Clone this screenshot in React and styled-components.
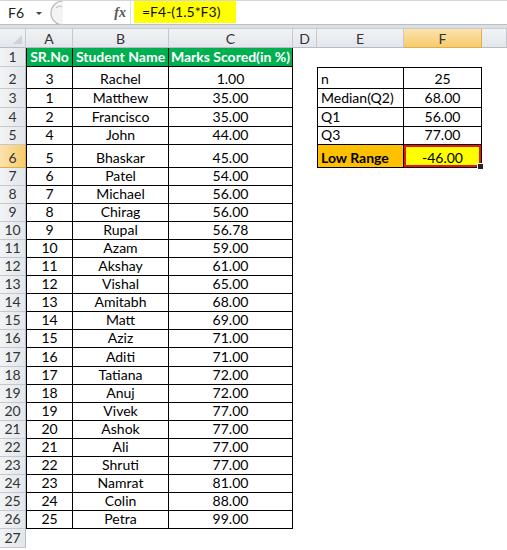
import React from 'react';
import styled, { createGlobalStyle } from 'styled-components';

const GlobalStyle = createGlobalStyle`
  html, body { margin: 0; padding: 0; background: #fff; }
  body { font-family: Lato, "Open Sans", sans-serif; }
`;

const Sheet = styled.div`
  width: 507px;
  height: 550px;
  overflow: hidden;
  background: #fff;
  display: flex;
  flex-direction: column;
`;

const FormulaBar = styled.div`
  display: flex;
  height: 25px;
  box-sizing: border-box;
  border-top: 1px solid #d6d6d6;
  border-bottom: 1px solid #b9bec5;
  background: #fff;
`;

const NameBox = styled.div`
  width: 48px;
  display: flex;
  align-items: center;
  justify-content: space-between;
  padding: 0 6px 0 8px;
  box-sizing: border-box;
  font-size: 14px;
  color: #222;
`;

const Arrow = styled.span`
  width: 0;
  height: 0;
  border-left: 3px solid transparent;
  border-right: 3px solid transparent;
  border-top: 3px solid #444;
  margin-top: 2px;
`;

const Grabber = styled.svg`
  width: 16px;
  height: 24px;
  flex: none;
`;

const FxZone = styled.div`
  width: 66px;
  display: flex;
  align-items: center;
  justify-content: flex-end;
  padding-right: 4px;
  box-sizing: border-box;
`;

const Fx = styled.span`
  font-family: "Liberation Serif", serif;
  font-style: italic;
  font-weight: 700;
  font-size: 14px;
  color: #555;
`;

const FormulaInput = styled.div`
  flex: 1;
  display: flex;
  align-items: stretch;
  padding-left: 3px;
  border-left: 1px solid #e0e0e0;
`;

const Highlight = styled.span`
  background: #ffff00;
  display: flex;
  align-items: center;
  padding: 0 16px 1px 8px;
  font-size: 14px;
  color: #111;
  margin-bottom: 1px;
`;

const Band = styled.div`
  height: 4px;
  background: #dcdfe3;
  border-bottom: 1px solid #c8ccd1;
  box-sizing: border-box;
`;

const Grid = styled.div`
  display: grid;
  grid-template-columns: 26px 47px 96px 124px 24px 87px 78px 1fr;
  grid-template-rows: 19px 19px 22px 19px 19px 18px 23px repeat(20, 18.05px) 1fr;
`;

const Corner = styled.div`
  position: relative;
  background: linear-gradient(#f1f3f5, #e3e6ea);
  border-right: 1px solid #c5c9cf;
  border-bottom: 1px solid #b5bcc5;
  box-sizing: border-box;

  &::after {
    content: '';
    position: absolute;
    right: 3px;
    bottom: 3px;
    border-left: 9px solid transparent;
    border-bottom: 9px solid #cfd3d8;
  }
`;

const ColHead = styled.div`
  box-sizing: border-box;
  display: flex;
  align-items: center;
  justify-content: center;
  font-size: 14px;
  color: #333;
  background: ${p => (p.$active ? 'linear-gradient(#fbe3ae, #f6cc6d)' : 'linear-gradient(#f1f3f5, #e3e6ea)')};
  border-right: 1px solid ${p => (p.$active ? '#e2ac46' : '#c5c9cf')};
  border-bottom: 1px solid ${p => (p.$active ? '#e2ac46' : '#b5bcc5')};
`;

const RowHead = styled.div`
  box-sizing: border-box;
  display: flex;
  align-items: flex-end;
  justify-content: center;
  padding-bottom: 1px;
  font-size: 14px;
  line-height: 17px;
  color: #333;
  background: ${p => (p.$active ? 'linear-gradient(90deg, #fbe3ae, #f6cc6d)' : 'linear-gradient(90deg, #f1f3f5, #e3e6ea)')};
  border-right: 1px solid ${p => (p.$active ? '#e2ac46' : '#b5bcc5')};
  border-bottom: 1px solid ${p => (p.$active ? '#e2ac46' : '#c5c9cf')};
`;

const line = '1px solid #000';

const Cell = styled.div`
  box-sizing: border-box;
  position: relative;
  display: flex;
  align-items: flex-end;
  justify-content: ${p => (p.$align === 'left' ? 'flex-start' : 'center')};
  padding: 0 3px 1px;
  font-size: 14px;
  line-height: 17px;
  white-space: nowrap;
  color: ${p => p.$color || '#000'};
  font-weight: ${p => (p.$bold ? 700 : 400)};
  background: ${p => p.$bg || 'transparent'};
  border-right: ${p => (p.$box ? line : 'none')};
  border-bottom: ${p => (p.$box ? line : 'none')};
  border-left: ${p => (p.$left ? line : 'none')};
  border-top: ${p => (p.$top ? line : 'none')};
`;

const Selected = styled(Cell)`
  box-shadow: inset 0 0 0 2px #e8131b;

  &::after {
    content: '';
    position: absolute;
    right: -3px;
    bottom: -3px;
    width: 5px;
    height: 5px;
    background: #222;
    border: 1px solid #fff;
  }
`;

const students = [
  [3, 'Rachel', '1.00'],
  [1, 'Matthew', '35.00'],
  [2, 'Francisco', '35.00'],
  [4, 'John', '44.00'],
  [5, 'Bhaskar', '45.00'],
  [6, 'Patel', '54.00'],
  [7, 'Michael', '56.00'],
  [8, 'Chirag', '56.00'],
  [9, 'Rupal', '56.78'],
  [10, 'Azam', '59.00'],
  [11, 'Akshay', '61.00'],
  [12, 'Vishal', '65.00'],
  [13, 'Amitabh', '68.00'],
  [14, 'Matt', '69.00'],
  [15, 'Aziz', '71.00'],
  [16, 'Aditi', '71.00'],
  [17, 'Tatiana', '72.00'],
  [18, 'Anuj', '72.00'],
  [19, 'Vivek', '77.00'],
  [20, 'Ashok', '77.00'],
  [21, 'Ali', '77.00'],
  [22, 'Shruti', '77.00'],
  [23, 'Namrat', '81.00'],
  [24, 'Colin', '88.00'],
  [25, 'Petra', '99.00'],
];

const stats = [
  ['n', '25'],
  ['Median(Q2)', '68.00'],
  ['Q1', '56.00'],
  ['Q3', '77.00'],
];

const columns = ['A', 'B', 'C', 'D', 'E', 'F', ''];

const GREEN = '#00b050';

const StatCells = ({ row }) => {
  const i = row - 2;
  if (i >= 0 && i < stats.length) {
    return (
      <>
        <Cell $box $left $top={i === 0} $align="left">{stats[i][0]}</Cell>
        <Cell $box $top={i === 0}>{stats[i][1]}</Cell>
      </>
    );
  }
  if (row === 6) {
    return (
      <>
        <Cell $box $left $bold $bg="#ffc000" $align="left">Low Range</Cell>
        <Selected $box $bg="#ffff00">-46.00</Selected>
      </>
    );
  }
  return (
    <>
      <Cell />
      <Cell />
    </>
  );
};

const App = () => {
  const rows = [];
  for (let r = 1; r <= 27; r++) {
    const s = students[r - 2];
    rows.push(
      <React.Fragment key={r}>
        <RowHead $active={r === 6}>{r}</RowHead>
        {r === 1 ? (
          <>
            <Cell $box $left $bold $color="#fff" $bg={GREEN}>SR.No</Cell>
            <Cell $box $bold $color="#fff" $bg={GREEN}>Student Name</Cell>
            <Cell $box $bold $color="#fff" $bg={GREEN}>Marks Scored(in %)</Cell>
          </>
        ) : s ? (
          <>
            <Cell $box $left>{s[0]}</Cell>
            <Cell $box>{s[1]}</Cell>
            <Cell $box>{s[2]}</Cell>
          </>
        ) : (
          <>
            <Cell />
            <Cell />
            <Cell />
          </>
        )}
        <Cell />
        <StatCells row={r} />
        <Cell />
      </React.Fragment>
    );
  }

  return (
    <Sheet>
      <GlobalStyle />
      <FormulaBar>
        <NameBox>
          F6
          <Arrow />
        </NameBox>
        <Grabber viewBox="0 0 16 24">
          <path d="M15 0 A 12 12 0 0 0 15 24" fill="#f4f4f4" stroke="#b8b8b8" strokeWidth="1.2" />
          <path d="M8 7 Q 11 4 14 6" fill="none" stroke="#c8c8c8" strokeWidth="1.2" />
        </Grabber>
        <FxZone>
          <Fx>fx</Fx>
        </FxZone>
        <FormulaInput>
          <Highlight>=F4-(1.5*F3)</Highlight>
        </FormulaInput>
      </FormulaBar>
      <Band />
      <Grid>
        <Corner />
        {columns.map((c, i) => (
          <ColHead key={i} $active={c === 'F'}>{c}</ColHead>
        ))}
        {rows}
      </Grid>
    </Sheet>
  );
};

export default App;
